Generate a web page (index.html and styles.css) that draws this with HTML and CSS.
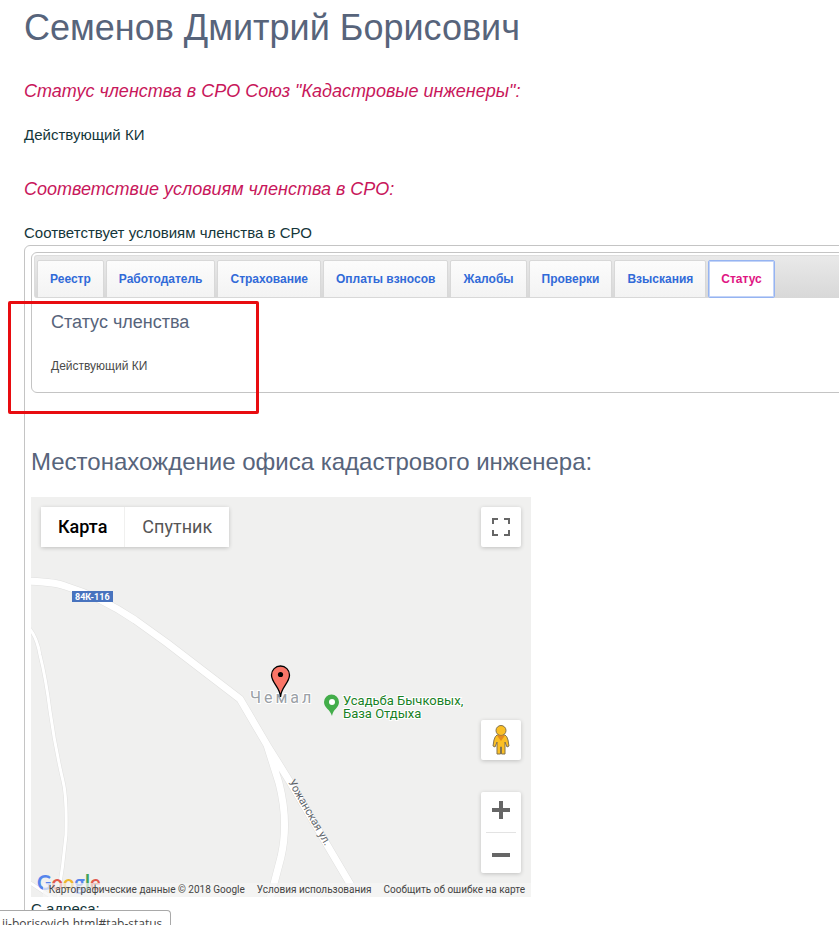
FILE: index.html
```html
<!DOCTYPE html>
<html lang="ru">
<head>
<meta charset="utf-8">
<title>Семенов Дмитрий Борисович</title>
<link rel="stylesheet" href="styles.css">
</head>
<body>
<main class="page">
  <h1>Семенов Дмитрий Борисович</h1>
  <h3>Статус членства в СРО Союз "Кадастровые инженеры":</h3>
  <p>Действующий КИ</p>
  <h3>Соответствие условиям членства в СРО:</h3>
  <p>Соответствует условиям членства в СРО</p>

  <section class="card">
    <div class="tabs">
      <nav class="tab-bar">
        <a class="tab" href="#tab-registry">Реестр</a>
        <a class="tab" href="#tab-employer">Работодатель</a>
        <a class="tab" href="#tab-insurance">Страхование</a>
        <a class="tab" href="#tab-payments">Оплаты взносов</a>
        <a class="tab" href="#tab-complaints">Жалобы</a>
        <a class="tab" href="#tab-checks">Проверки</a>
        <a class="tab" href="#tab-penalties">Взыскания</a>
        <a class="tab tab-active" href="#tab-status">Статус</a>
      </nav>
      <div class="tab-panel" id="tab-status">
        <h4>Статус членства</h4>
        <p>Действующий КИ</p>
      </div>
    </div>

    <h2>Местонахождение офиса кадастрового инженера:</h2>

    <div class="map">
      <svg class="map-canvas" viewBox="0 0 500 400" role="img" aria-label="Чемал">
        <g fill="none" stroke-linejoin="round">
          <g stroke="#e0e0df">
            <path stroke-width="4" d="M-2 131Q6 140 9 158Q15 182 19 214Q24 250 32 284Q36 300 35 338Q32 370 27 400M-2 385L22 401"/>
            <path stroke-width="8" d="M-4 84Q25 85 34 89Q70 100 104 123L136 146L209 202L236 248L248 286Q258 325 250 360L239 402M236 248L259 285L328 402"/>
          </g>
          <g stroke="#fff">
            <path stroke-width="3" d="M-2 131Q6 140 9 158Q15 182 19 214Q24 250 32 284Q36 300 35 338Q32 370 27 400M-2 385L22 401"/>
            <path stroke-width="7" d="M-4 84Q25 85 34 89Q70 100 104 123L136 146L209 202L236 248L248 286Q258 325 250 360L239 402M236 248L259 285L328 402"/>
          </g>
        </g>
        <rect x="41" y="94" width="41" height="11" fill="#4873be"/>
        <text class="road-number" x="44" y="103">84К-116</text>
        <text class="town" x="219" y="206">Чемал</text>
        <text class="street" transform="translate(257 285) rotate(60)">Уожанская ул.</text>
        <path d="M301 219C299 212 293 211 293 205A7.500 7.500 0 0 1 308 205C308 211 302 212 301 219Z" fill="#43ad4a"/>
        <circle cx="301" cy="205" r="3" fill="#fff"/>
        <text class="place" x="312" y="208">Усадьба Бычковых,</text>
        <text class="place" x="312" y="221">База Отдыха</text>
        <path d="M249.500 200C249 190 240.500 186 240.500 178A9 9 0 0 1 258.500 178C258.500 186 250 190 249.500 200Z" fill="#fa7567" stroke="#000" stroke-width="1.300"/>
        <circle cx="249.500" cy="177.500" r="2.600"/>
        <text class="logo" x="6" y="393"><tspan fill="#5585ec">G</tspan><tspan fill="#e15a4c">o</tspan><tspan fill="#efb62d">o</tspan><tspan fill="#5585ec">g</tspan><tspan fill="#3fa45b">l</tspan><tspan fill="#e15a4c">e</tspan></text>
      </svg>

      <div class="map-types">
        <button class="map-type map-type-active" type="button">Карта</button>
        <button class="map-type" type="button">Спутник</button>
      </div>
      <button class="map-button fullscreen" type="button" aria-label="Полный экран">
        <svg width="18" height="18" viewBox="0 0 18 18"><path d="M1 6V1H6M12 1H17V6M17 12V17H12M6 17H1V12" fill="none" stroke="#666" stroke-width="2"/></svg>
      </button>
      <div class="map-side">
        <button class="map-button" type="button" aria-label="Просмотр улиц">
          <svg width="18" height="32" viewBox="0 0 18 32">
            <g fill="#fbbf24" stroke="#83734f" stroke-width="1">
              <path d="M5 11H13Q15 12 16 16L17 22L15 23L13 18V30H9.500V23H8.500V30H5V18L3 23L1 22L2 16Q3 12 5 11Z"/>
              <circle cx="9" cy="6.500" r="5"/>
            </g>
            <path d="M5 11.500H13L9 17Z" fill="#e48a1d"/>
          </svg>
        </button>
        <div class="zoom">
          <button type="button" aria-label="Увеличить масштаб"><svg width="18" height="18" viewBox="0 0 18 18"><path d="M0 9H18M9 0V18" stroke="#666" stroke-width="4"/></svg></button>
          <button type="button" aria-label="Уменьшить масштаб"><svg width="18" height="18" viewBox="0 0 18 18"><path d="M0 9H18" stroke="#666" stroke-width="4"/></svg></button>
        </div>
      </div>
      <div class="map-legal">
        <span>Картографические данные © 2018 Google</span>
        <a href="#terms">Условия использования</a>
        <a href="#report">Сообщить об ошибке на карте</a>
      </div>
    </div>
    <p class="address">С адреса:</p>
  </section>
  <div class="highlight"></div>
</main>
<div class="link-status">ii-borisovich.html#tab-status</div>
</body>
</html>
```
FILE: styles.css
```css
* {
  box-sizing: border-box;
}

body {
  margin: 0;
  height: 100vh;
  overflow: hidden;
  background: #fff;
  color: #14363a;
  font: 15px/20px "Liberation Sans", Arial, sans-serif;
}

h1, h2, h3, h4, p {
  margin: 0;
  font-weight: 400;
}

.page {
  position: relative;
  padding: 8px 0 0 24px;
}

h1, h2, h4 {
  color: #57647b;
}

h1 {
  font-size: 36px;
  line-height: 40px;
}

h3 {
  margin-top: 34px;
  color: #c8175b;
  font-size: 18px;
  font-style: italic;
}

h1 + h3 {
  margin-top: 33px;
}

h3 + p {
  margin-top: 24px;
}

.card {
  margin: 2px -24px 0 0;
  padding: 6px;
  border: 1px solid #c4c4c4;
  border-radius: 6px;
}

.tabs {
  margin-right: -24px;
  padding: 2px;
  border: 1px solid #c4c4c4;
  border-radius: 6px;
}

.tab-bar {
  display: flex;
  gap: 2px;
  padding: 4px 2px 0;
  border: 1px solid #ddd;
  border-bottom: 0;
  border-radius: 3px 0 0 3px;
  background: linear-gradient(#e9e9e9, #d8d8d8);
}

.tab {
  padding: 0 12px;
  border: 1px solid #d8d8d8;
  border-radius: 2px 2px 0 0;
  background: linear-gradient(#fcfcfc, #f3f3f3);
  color: #316ad8;
  font-size: 12px;
  font-weight: 700;
  line-height: 36px;
  text-decoration: none;
  white-space: nowrap;
}

.tab-active {
  border-color: #96b4f1;
  box-shadow: inset 0 0 0 1px #c3d4f8;
  border-radius: 2px;
  background: #fff;
  color: #e01683;
}

.tab-panel {
  padding: 12px 17px 14px;
}

h4 {
  font-size: 18px;
  line-height: 24px;
}

.tab-panel p {
  margin-top: 22px;
  color: #4a4a4a;
  font-size: 12px;
}

h2 {
  margin-top: 54px;
  font-size: 24px;
  line-height: 30px;
}

.map {
  position: relative;
  max-width: 500px;
  margin-top: 20px;
  overflow: hidden;
  background: #f0f0ef;
  font-family: Roboto, sans-serif;
}

.map-canvas {
  display: block;
  width: 100%;
}

.road-number {
  fill: #fff;
  font-size: 9px;
  font-weight: 700;
}

.town {
  fill: #9aa0a6;
  stroke: #fff;
  stroke-width: 2px;
  paint-order: stroke;
  font-size: 16px;
  letter-spacing: 3px;
}

.street {
  fill: #5d6369;
  font-size: 11px;
}

.place {
  fill: #188125;
  stroke: #fff;
  stroke-width: 2px;
  paint-order: stroke;
  font-size: 13px;
}

.logo {
  font-family: Lato, sans-serif;
  font-size: 20px;
  font-weight: 700;
}

.map button {
  border: 0;
  background: #fff;
  font-family: inherit;
}

.map-types {
  position: absolute;
  top: 10px;
  left: 10px;
  display: flex;
  gap: 1px;
}

.map-types, .map-button, .zoom {
  border-radius: 2px;
  box-shadow: 0 1px 4px rgba(0, 0, 0, 0.2);
}

.map-type {
  height: 40px;
  padding: 0 17px 2px;
  color: #565656;
  font-size: 18px;
}

.map-type-active {
  color: #000;
  font-weight: 500;
}

.map-button {
  display: grid;
  place-items: center;
  width: 40px;
  height: 40px;
  padding: 0;
}

.fullscreen {
  position: absolute;
  top: 10px;
  right: 10px;
}

.map-side {
  position: absolute;
  right: 10px;
  bottom: 24px;
  display: grid;
  gap: 32px;
}

.zoom {
  display: grid;
  width: 40px;
  background: #fff;
}

.zoom button {
  display: grid;
  place-items: center;
  height: 40px;
  margin: 0 5px;
  padding: 0 0 4px;
}

.zoom button + button {
  height: 41px;
  padding: 4px 0 0;
  border-top: 1px solid #e3e3e3;
}

.map-legal {
  position: absolute;
  right: 0;
  bottom: 0;
  display: flex;
  gap: 12px;
  padding: 0 6px;
  background: rgba(245, 245, 245, 0.7);
  color: #444;
  font-size: 10px;
  line-height: 14px;
  white-space: nowrap;
}

.map-legal a {
  color: inherit;
  text-decoration: none;
}

.address {
  margin-top: 2px;
}

.highlight {
  position: absolute;
  top: 301px;
  left: 8px;
  width: 251px;
  height: 113px;
  border: 3px solid #e80c10;
  border-radius: 2px;
}

.link-status {
  position: fixed;
  bottom: 0;
  left: 0;
  height: 15px;
  padding: 4px 8px 0 2px;
  overflow: hidden;
  border: 1px solid #a9a9a9;
  border-width: 1px 1px 0 0;
  border-radius: 0 4px 0 0;
  background: #fff;
  color: #444;
  font: 12px/18px "Open Sans", sans-serif;
}
```
